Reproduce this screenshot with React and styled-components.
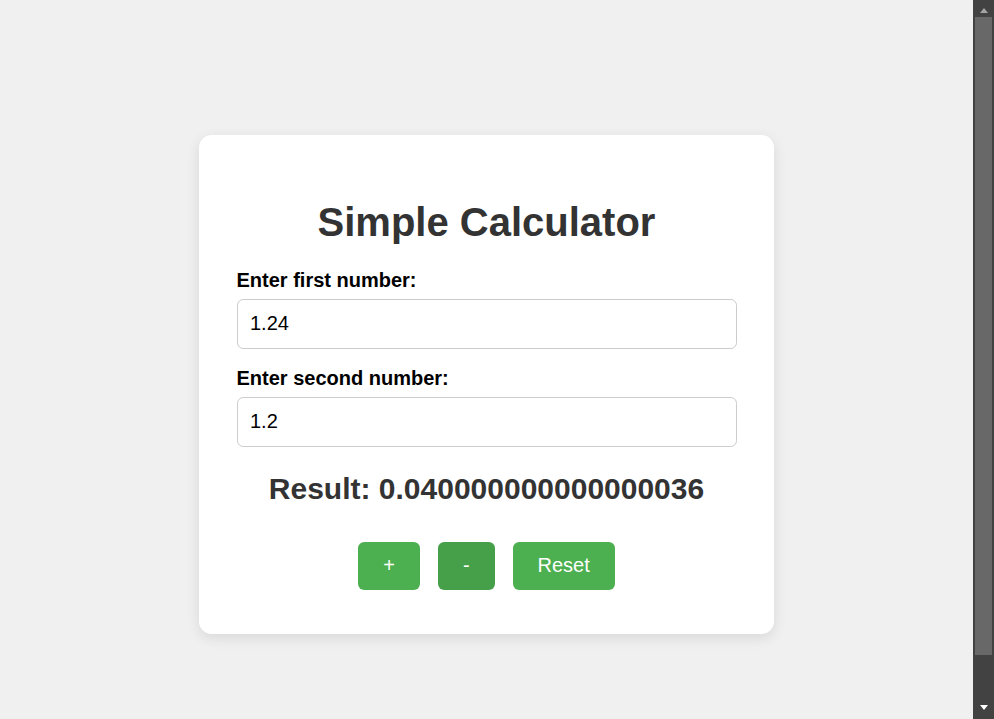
import React, { useState } from "react";
import styled, { createGlobalStyle } from "styled-components";

const GlobalStyle = createGlobalStyle`
  html {
    background: #f0f0f0;
    scrollbar-width: none;
  }
  html::-webkit-scrollbar {
    display: none;
  }
  body {
    margin: 0;
    padding: 25px 46px 25px 25px;
    height: 719px;
    display: flex;
    justify-content: center;
    align-items: center;
    background: #f0f0f0;
    font-family: "Liberation Sans", Arial, sans-serif;
  }
`;

const ScrollBar = styled.div`
  position: fixed;
  top: 0;
  right: 0;
  width: 21px;
  height: 100vh;
  background: #424242;
  display: flex;
  flex-direction: column;
  z-index: 10;
`;

const ScrollButton = styled.div`
  height: 17px;
  flex: none;
  display: flex;
  justify-content: center;
  align-items: ${(p) => (p.$down ? "flex-end" : "flex-start")};
  padding: ${(p) => (p.$down ? "0 0 9px" : "8px 0 0")};
  box-sizing: border-box;
  &::after {
    content: "";
    width: 0;
    height: 0;
    border-left: 4.5px solid transparent;
    border-right: 4.5px solid transparent;
    ${(p) =>
      p.$down
        ? "border-top: 5px solid #ffffff;"
        : "border-bottom: 5px solid #a3a3a3;"}
  }
`;

const ScrollTrack = styled.div`
  flex: 1;
  padding: 0 2px;
`;

const ScrollThumb = styled.div`
  height: 638px;
  background: #686868;
`;

const Card = styled.div`
  width: 500px;
  padding: 37.5px;
  background: #ffffff;
  border-radius: 12.5px;
  box-shadow: 0 4px 14px rgba(0, 0, 0, 0.1);
  text-align: center;
`;

const Title = styled.h1`
  margin: 26.8px 0 24.5px;
  font-size: 40px;
  font-weight: bold;
  line-height: 46px;
  color: #333333;
`;

const Field = styled.div`
  text-align: left;
  margin-bottom: ${(p) => (p.$last ? "0" : "18.5px")};
`;

const Label = styled.label`
  display: block;
  margin-bottom: 6.5px;
  font-size: 20px;
  line-height: 23px;
  font-weight: bold;
  color: #000000;
`;

const Input = styled.input`
  display: block;
  width: 100%;
  box-sizing: border-box;
  height: 50px;
  padding: 12.5px;
  border: 1px solid #cccccc;
  border-radius: 6.25px;
  font-family: "Liberation Sans", Arial, sans-serif;
  font-size: 20px;
  color: #000000;
  background: #ffffff;
  outline: none;
`;

const Result = styled.div`
  margin: 25px 0 35.5px;
  font-size: 30px;
  line-height: 34.5px;
  font-weight: bold;
  color: #333333;
`;

const ButtonRow = styled.div`
  display: flex;
  justify-content: center;
  gap: 18px;
  margin-bottom: 7px;
`;

const Button = styled.button`
  height: 48px;
  padding: 0 25px;
  border: none;
  border-radius: 6.25px;
  background: ${(p) => (p.$active ? "#45a049" : "#4caf50")};
  color: #ffffff;
  font-family: "Liberation Sans", Arial, sans-serif;
  font-size: 20px;
  cursor: pointer;
  &:hover {
    background: #45a049;
  }
`;

export default function App() {
  const [a, setA] = useState("1.24");
  const [b, setB] = useState("1.2");
  const [result, setResult] = useState(1.24 - 1.2);

  const add = () => setResult(parseFloat(a) + parseFloat(b));
  const sub = () => setResult(parseFloat(a) - parseFloat(b));
  const reset = () => {
    setA("");
    setB("");
    setResult(0);
  };

  return (
    <>
      <GlobalStyle />
      <Card>
        <Title>Simple Calculator</Title>
        <Field>
          <Label htmlFor="num1">Enter first number:</Label>
          <Input id="num1" type="text" value={a} onChange={(e) => setA(e.target.value)} />
        </Field>
        <Field $last>
          <Label htmlFor="num2">Enter second number:</Label>
          <Input id="num2" type="text" value={b} onChange={(e) => setB(e.target.value)} />
        </Field>
        <Result>Result: {String(result)}</Result>
        <ButtonRow>
          <Button onClick={add}>+</Button>
          <Button $active onClick={sub}>-</Button>
          <Button onClick={reset}>Reset</Button>
        </ButtonRow>
      </Card>
      <ScrollBar aria-hidden="true">
        <ScrollButton />
        <ScrollTrack>
          <ScrollThumb />
        </ScrollTrack>
        <ScrollButton $down />
      </ScrollBar>
    </>
  );
}
